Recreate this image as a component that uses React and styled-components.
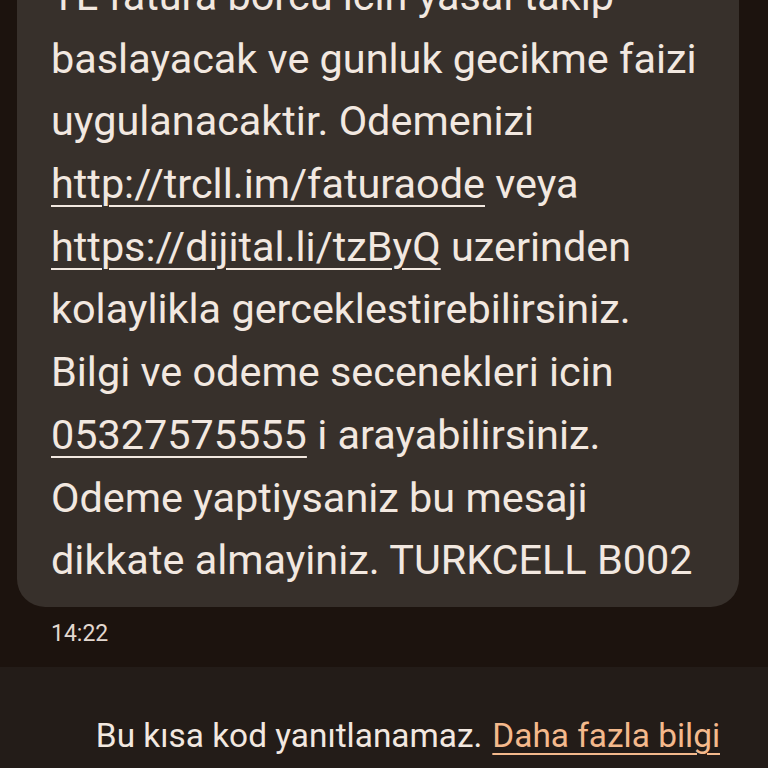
import React from 'react';
import styled, { createGlobalStyle } from 'styled-components';

const GlobalStyle = createGlobalStyle`
  html, body {
    margin: 0;
    padding: 0;
    background: #1c130e;
  }
  body {
    font-family: Roboto, "Noto Sans", sans-serif;
  }
`;

const Screen = styled.div`
  width: 768px;
  height: 768px;
  overflow: hidden;
  display: flex;
  flex-direction: column;
  background: #1c130e;
`;

const Thread = styled.div`
  flex: 1;
  min-height: 0;
  display: flex;
  flex-direction: column;
  justify-content: flex-end;
  padding: 0 29px 19px 17px;
  overflow: hidden;
`;

const Bubble = styled.div`
  flex-shrink: 0;
  background: #37302b;
  border-radius: 0 0 28px 28px;
  padding: 0 16px 15px 34px;
  color: #f2e8e0;
  font-size: 41.4px;
  line-height: 62.7px;
  white-space: nowrap;
`;

const Link = styled.span`
  text-decoration: underline;
  text-decoration-thickness: 2px;
  text-underline-offset: 7px;
`;

const Time = styled.div`
  margin: 13px 0 0 34px;
  font-size: 23px;
  line-height: 28px;
  color: #e2d8d0;
`;

const Footer = styled.div`
  flex-shrink: 0;
  height: 101px;
  background: #231c18;
  display: flex;
  align-items: flex-end;
  justify-content: flex-end;
  padding: 0 48px 13px 0;
  box-sizing: border-box;
  font-size: 33.4px;
  color: #f2e8e0;
  white-space: nowrap;
`;

const MoreLink = styled.span`
  margin-left: 10px;
  color: #f4b98c;
  text-decoration: underline;
  text-decoration-thickness: 2px;
  text-underline-offset: 6px;
`;

export default function App() {
  return (
    <Screen>
      <GlobalStyle />
      <Thread>
        <Bubble>
          TL fatura borcu icin yasal takip<br />
          baslayacak ve gunluk gecikme faizi<br />
          uygulanacaktir. Odemenizi<br />
          <Link>http://trcll.im/faturaode</Link> veya<br />
          <Link>https://dijital.li/tzByQ</Link> uzerinden<br />
          kolaylikla gerceklestirebilirsiniz.<br />
          Bilgi ve odeme secenekleri icin<br />
          <Link>05327575555</Link> i arayabilirsiniz.<br />
          Odeme yaptiysaniz bu mesaji<br />
          dikkate almayiniz. TURKCELL B002
        </Bubble>
        <Time>14:22</Time>
      </Thread>
      <Footer>
        Bu kısa kod yanıtlanamaz.<MoreLink>Daha fazla bilgi</MoreLink>
      </Footer>
    </Screen>
  );
}
